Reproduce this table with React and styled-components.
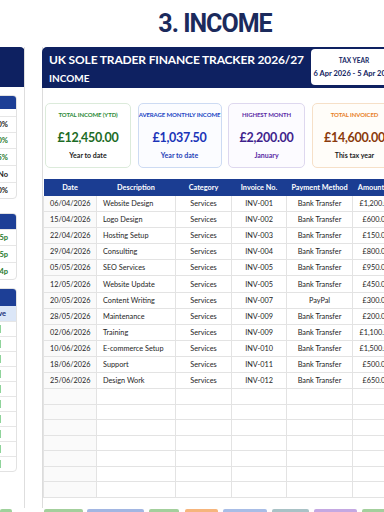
import React from "react"
import styled, { createGlobalStyle } from "styled-components"

const GlobalStyle = createGlobalStyle`
  html, body {
    margin: 0;
    padding: 0;
    background: #ffffff;
    overflow: hidden;
  }
  body {
    font-family: Lato, "Open Sans", "Liberation Sans", sans-serif;
    color: #222222;
  }
`

const Page = styled.div`
  width: 384px;
  height: 512px;
  overflow: hidden;
  display: flex;
  flex-direction: column;
`
const Title = styled.h1`
  flex-shrink: 0;
  margin: 0 0 0 46px;
  height: 47px;
  padding-top: 9px;
  box-sizing: border-box;
  text-align: center;
  font-family: Roboto, "Liberation Sans", sans-serif;
  font-weight: 700;
  font-size: 25px;
  line-height: 30px;
  letter-spacing: -1px;
  color: #1b2a5c;
`
const Workspace = styled.div`
  display: flex;
  gap: 17px;
  height: 461px;
  flex-shrink: 0;
`

/* left sidebar, mostly off screen */
const Side = styled.div`
  flex: 0 0 25px;
  overflow: hidden;
  display: flex;
  flex-direction: column;
  align-items: flex-end;
  border-right: 1px solid #dedede;
  box-sizing: border-box;
`
const SideHeader = styled.div`
  width: 160px;
  height: 40px;
  flex-shrink: 0;
  background: #0e2161;
  border-top-right-radius: 5px;
  margin-right: -1px;
`
const SideBody = styled.div`
  display: flex;
  flex-direction: column;
  align-items: flex-end;
  padding-right: 7px;
`
const MiniCard = styled.div`
  width: 140px;
  margin-top: ${p => p.$top}px;
  border: 1px solid #e2e2e2;
  border-radius: 0 4px 4px 0;
  overflow: hidden;
  background: #ffffff;
`
const MiniHead = styled.div`
  height: ${p => p.$h}px;
  background: #1d3f96;
`
const MiniGap = styled.div`
  height: 7px;
`
const MiniSub = styled.div`
  height: 15px;
  background: #dbe6f7;
  color: #1a2f7a;
  font-size: 7.5px;
  font-weight: 700;
  text-align: right;
  line-height: 15px;
  padding-right: 10px;
`
const MiniRow = styled.div`
  height: ${p => p.$h}px;
  line-height: ${p => p.$h}px;
  border-top: 1px solid #e6e6e6;
  box-sizing: border-box;
  text-align: right;
  padding-right: 8px;
  font-size: 7.5px;
  font-weight: 700;
  color: ${p => (p.$green ? "#1f7a2e" : "#222222")};
`
const MarkRow = styled.div`
  height: 15px;
  border-top: 1px solid #e6e6e6;
  box-sizing: border-box;
  display: flex;
  justify-content: flex-end;
  padding-right: 15px;
  &::after {
    content: "";
    width: 2px;
    height: 8px;
    margin-top: 3px;
    background: #8fd39a;
  }
`

/* main panel */
const Main = styled.div`
  flex: 0 0 375px;
  min-width: 0;
  display: flex;
  flex-direction: column;
  border-left: 1px solid #dcdcdc;
  box-sizing: border-box;
`
const Banner = styled.div`
  height: 41px;
  flex-shrink: 0;
  background: #0e2161;
  border-top-left-radius: 5px;
  margin-left: -1px;
  display: flex;
  justify-content: space-between;
  align-items: flex-start;
  padding: 5px 20px 0 7px;
  box-sizing: border-box;
  color: #ffffff;
`
const BannerText = styled.div`
  display: flex;
  flex-direction: column;
`
const BannerTitle = styled.div`
  font-size: 12px;
  font-weight: 700;
  line-height: 15px;
  letter-spacing: -0.15px;
  white-space: nowrap;
`
const BannerSub = styled.div`
  margin-top: 5px;
  font-size: 10px;
  font-weight: 700;
  line-height: 12px;
`
const TaxBox = styled.div`
  flex-shrink: 0;
  width: 86px;
  height: 36px;
  margin-top: -3px;
  background: #ffffff;
  border-radius: 4px;
  color: #13245f;
  display: flex;
  flex-direction: column;
  align-items: center;
  justify-content: center;
  gap: 4px;
  font-weight: 700;
`
const TaxLabel = styled.div`
  font-size: 6.5px;
  line-height: 8px;
`
const TaxRange = styled.div`
  font-size: 7.5px;
  line-height: 9px;
  white-space: nowrap;
`

const Cards = styled.div`
  display: grid;
  grid-template-columns: 86px 84px 77px 86px;
  column-gap: 6.5px;
  padding: 15px 0 0 2px;
`
const Card = styled.div`
  height: 65px;
  box-sizing: border-box;
  border: 1px solid ${p => p.$border};
  background: ${p => p.$bg};
  border-radius: 5px;
  display: flex;
  flex-direction: column;
  align-items: center;
  padding-top: 7px;
`
const CardLabel = styled.div`
  font-size: 6px;
  font-weight: 700;
  line-height: 8px;
  letter-spacing: -0.1px;
  color: ${p => p.$color};
  white-space: nowrap;
`
const CardValue = styled.div`
  margin-top: 10px;
  font-size: 12.5px;
  font-weight: 700;
  line-height: 18px;
  letter-spacing: -0.3px;
  color: ${p => p.$color};
  white-space: nowrap;
`
const CardNote = styled.div`
  margin-top: 4px;
  font-size: 7px;
  font-weight: 700;
  line-height: 9px;
  color: ${p => p.$color};
`

const TableWrap = styled.div`
  margin: 11px 0 0 0;
  flex: 1;
  overflow: hidden;
`
const Table = styled.table`
  width: 356px;
  table-layout: fixed;
  border-collapse: collapse;
  font-size: 7.3px;
`
const Th = styled.th`
  height: 17px;
  padding: 0;
  background: #1b3d92;
  color: #ffffff;
  font-weight: 700;
  text-align: center;
  white-space: nowrap;
`
const Td = styled.td`
  height: ${p => p.$h || 15.1}px;
  padding: 0;
  padding-left: ${p => (p.$align === "left" ? "6px" : "0")};
  border: 1px solid #e3e3e3;
  border-top: none;
  text-align: ${p => p.$align || "center"};
  color: #1e1e1e;
  white-space: nowrap;
  overflow: hidden;
  background: ${p => (p.$shade ? "#fafafa" : "#ffffff")};
`

const Tabs = styled.div`
  display: flex;
  flex-shrink: 0;
  height: 6px;
  padding-top: 1px;
`
const Tab = styled.div`
  flex: 0 0 ${p => p.$w}px;
  margin-left: ${p => p.$gap}px;
  background: ${p => p.$color};
  border-radius: 2px 2px 0 0;
`

const rows = [
  ["06/04/2026", "Website Design", "INV-001", "Bank Transfer", "£1,200.00"],
  ["15/04/2026", "Logo Design", "INV-002", "Bank Transfer", "£600.00"],
  ["22/04/2026", "Hosting Setup", "INV-003", "Bank Transfer", "£150.00"],
  ["29/04/2026", "Consulting", "INV-004", "Bank Transfer", "£800.00"],
  ["05/05/2026", "SEO Services", "INV-005", "Bank Transfer", "£950.00"],
  ["12/05/2026", "Website Update", "INV-005", "Bank Transfer", "£450.00"],
  ["20/05/2026", "Content Writing", "INV-007", "PayPal", "£300.00"],
  ["28/05/2026", "Maintenance", "INV-009", "Bank Transfer", "£200.00"],
  ["02/06/2026", "Training", "INV-009", "Bank Transfer", "£1,100.00"],
  ["10/06/2026", "E-commerce Setup", "INV-010", "Bank Transfer", "£1,500.00"],
  ["18/06/2026", "Support", "INV-011", "Bank Transfer", "£500.00"],
  ["25/06/2026", "Design Work", "INV-012", "Bank Transfer", "£650.00"],
]

const cards = [
  { label: "TOTAL INCOME (YTD)", value: "£12,450.00", note: "Year to date", lc: "#2c8a35", vc: "#1c6b25", nc: "#222222", border: "#dcebdb", bg: "#ffffff" },
  { label: "AVERAGE MONTHLY INCOME", value: "£1,037.50", note: "Year to date", lc: "#2146c4", vc: "#1a34b8", nc: "#1f3fb8", border: "#cddbf3", bg: "#fbfcff" },
  { label: "HIGHEST MONTH", value: "£2,200.00", note: "January", lc: "#5a2aa6", vc: "#3f1f8c", nc: "#5a2aa6", border: "#ded8ef", bg: "#fcfbff" },
  { label: "TOTAL INVOICED", value: "£14,600.00", note: "This tax year", lc: "#e8801e", vc: "#8a3a0c", nc: "#222222", border: "#f6e0c8", bg: "#fffdf9" },
]

const tabs = [
  { w: 12, gap: 0, color: "#9fd19b" },
  { w: 39, gap: 32, color: "#a3cf9c" },
  { w: 57, gap: 4, color: "#a2b6e2" },
  { w: 30, gap: 5, color: "#a3cf9c" },
  { w: 33, gap: 6, color: "#f6b57c" },
  { w: 44, gap: 5, color: "#a8bde6" },
  { w: 37, gap: 5, color: "#a9c2c6" },
  { w: 43, gap: 5, color: "#c4a8e2" },
  { w: 30, gap: 5, color: "#a3cf9c" },
]

const App = () => {
  const empty = Array.from({ length: 7 })
  return (
    <Page>
      <GlobalStyle />
      <Title>3. INCOME</Title>
      <Workspace>
        <Side>
          <SideHeader />
          <SideBody>
            <MiniCard $top={8}>
              <MiniHead $h={13} />
              <MiniGap />
              <MiniRow $h={16}>0%</MiniRow>
              <MiniRow $h={16} $green>0%</MiniRow>
              <MiniRow $h={17} $green>5%</MiniRow>
              <MiniRow $h={17}>No</MiniRow>
              <MiniRow $h={16}>0%</MiniRow>
            </MiniCard>
            <MiniCard $top={14}>
              <MiniHead $h={15} />
              <MiniRow $h={16} $green>45p</MiniRow>
              <MiniRow $h={17} $green>45p</MiniRow>
              <MiniRow $h={17} $green>24p</MiniRow>
            </MiniCard>
            <MiniCard $top={8}>
              <MiniHead $h={17} />
              <MiniSub>Active</MiniSub>
              {Array.from({ length: 10 }).map((_, i) => (
                <MarkRow key={i} />
              ))}
            </MiniCard>
          </SideBody>
        </Side>
        <Main>
          <Banner>
            <BannerText>
              <BannerTitle>UK SOLE TRADER FINANCE TRACKER 2026/27</BannerTitle>
              <BannerSub>INCOME</BannerSub>
            </BannerText>
            <TaxBox>
              <TaxLabel>TAX YEAR</TaxLabel>
              <TaxRange>6 Apr 2026 - 5 Apr 2027</TaxRange>
            </TaxBox>
          </Banner>
          <Cards>
            {cards.map(c => (
              <Card key={c.label} $border={c.border} $bg={c.bg}>
                <CardLabel $color={c.lc}>{c.label}</CardLabel>
                <CardValue $color={c.vc}>{c.value}</CardValue>
                <CardNote $color={c.nc}>{c.note}</CardNote>
              </Card>
            ))}
          </Cards>
          <TableWrap>
            <Table>
              <colgroup>
                <col style={{ width: 53 }} />
                <col style={{ width: 79 }} />
                <col style={{ width: 56 }} />
                <col style={{ width: 55 }} />
                <col style={{ width: 66 }} />
                <col style={{ width: 47 }} />
              </colgroup>
              <thead>
                <tr>
                  <Th>Date</Th>
                  <Th>Description</Th>
                  <Th>Category</Th>
                  <Th>Invoice No.</Th>
                  <Th>Payment Method</Th>
                  <Th>Amount (£)</Th>
                </tr>
              </thead>
              <tbody>
                {rows.map(r => (
                  <tr key={r[0]}>
                    <Td $align="left" $shade>{r[0]}</Td>
                    <Td $align="left">{r[1]}</Td>
                    <Td>Services</Td>
                    <Td>{r[2]}</Td>
                    <Td>{r[3]}</Td>
                    <Td>{r[4]}</Td>
                  </tr>
                ))}
                {empty.map((_, i) => (
                  <tr key={i}>
                    <Td $h={14.5} $shade />
                    <Td $h={14.5} />
                    <Td $h={14.5} />
                    <Td $h={14.5} />
                    <Td $h={14.5} />
                    <Td $h={14.5} />
                  </tr>
                ))}
              </tbody>
            </Table>
          </TableWrap>
        </Main>
      </Workspace>
      <Tabs>
        {tabs.map((t, i) => (
          <Tab key={i} $w={t.w} $gap={t.gap} $color={t.color} />
        ))}
      </Tabs>
    </Page>
  )
}

export default App
